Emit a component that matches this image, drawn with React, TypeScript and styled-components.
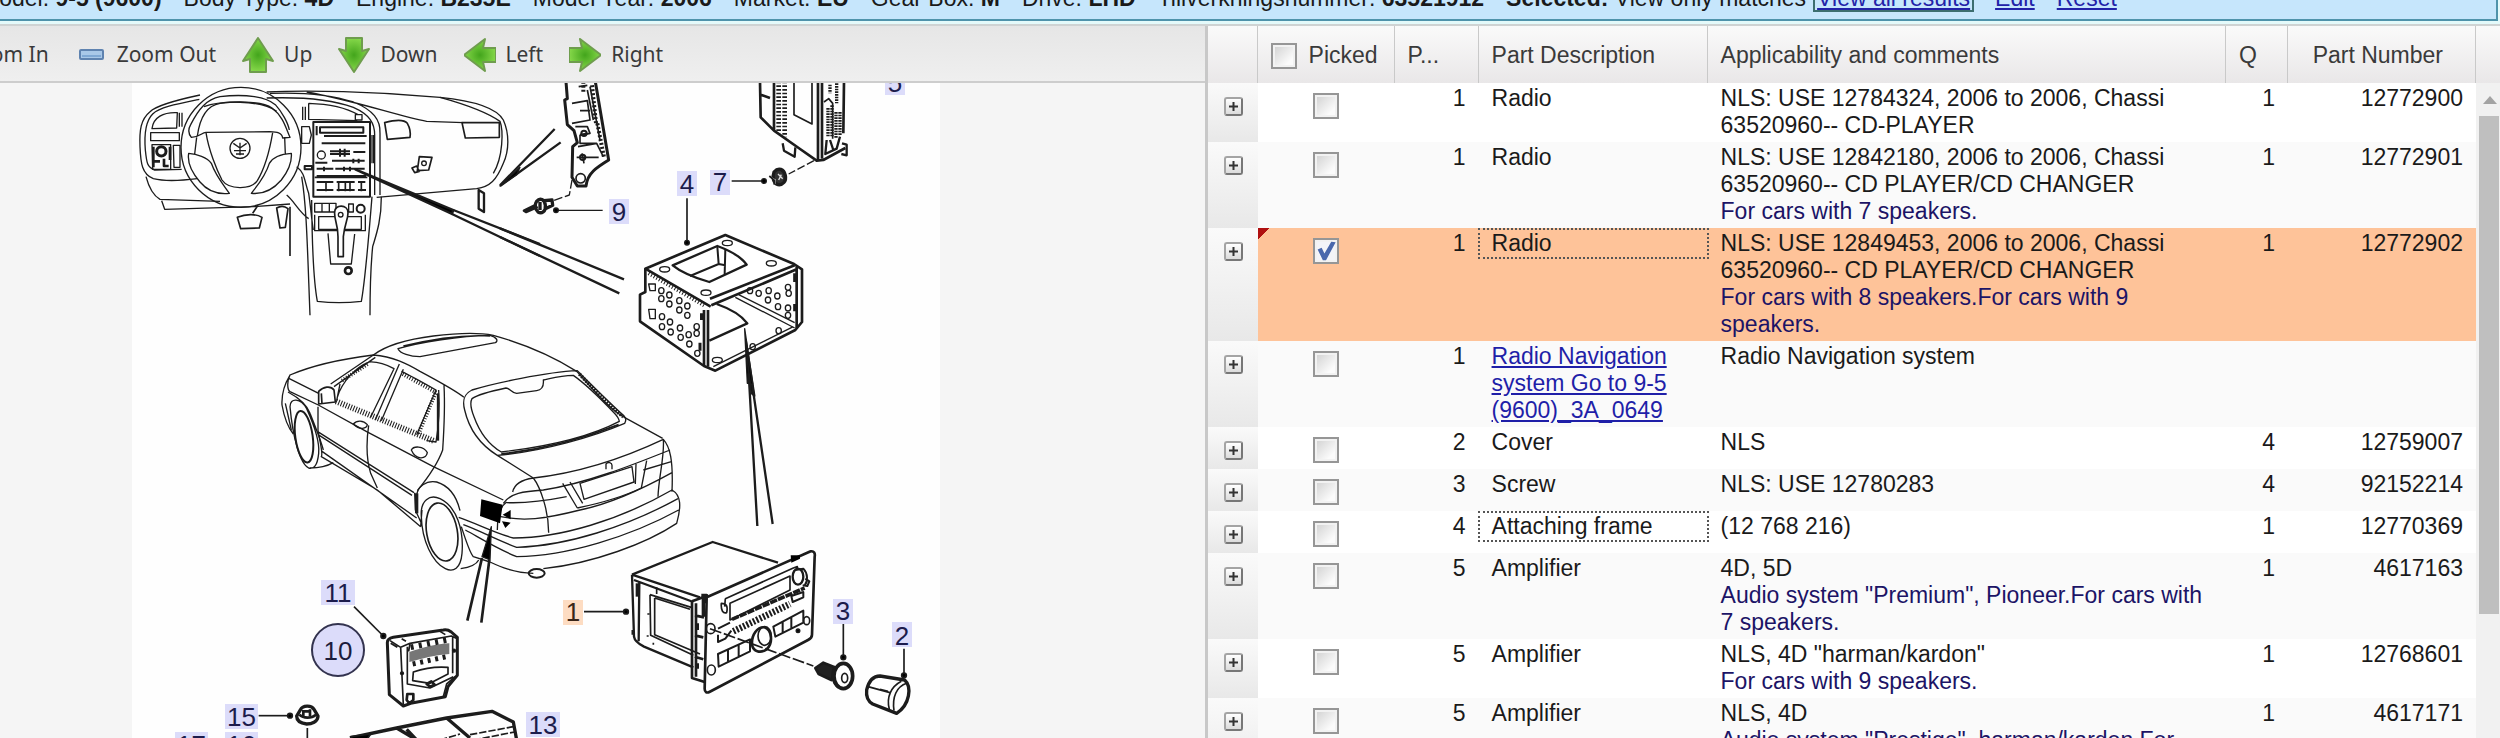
import React, { useState } from "react";
import styled, { createGlobalStyle, css } from "styled-components";

const GlobalStyle = createGlobalStyle`
  * { box-sizing: border-box; }
  body {
    margin: 0;
    font-family: "Liberation Sans", Arial, sans-serif;
    font-size: 23px;
    line-height: 27px;
    color: #1a1a1a;
    background: #fff;
  }
  button { font: inherit; color: inherit; }
`;

const Page = styled.div`
  display: flex;
  flex-direction: column;
  height: 100vh;
  overflow: hidden;
`;

/* vehicle filter bar */

const FilterBar = styled.header`
  flex: none;
  display: flex;
  height: 26px;
  overflow: hidden;
  background: #e4fafa;
  border-bottom: 2px solid #cfd3d3;
`;

const FilterInner = styled.div`
  flex: 1;
  display: flex;
  align-items: flex-end;
  height: 21px;
  margin-right: 2px;
  padding-bottom: 8px;
  background: #c6e6fc;
  border-bottom: 2px solid #4f93ab;
  border-right: 2px solid #4f93ab;
  line-height: 26px;
  white-space: pre;
`;

const FilterList = styled.div`
  flex: none;
  display: flex;
  gap: 22px;
  margin-left: -20px;
`;

const FilterActions = styled.div`
  flex: none;
  display: flex;
  gap: 22px;
  margin-left: 8px;
`;

const FilterLink = styled.a<{ $framed?: boolean }>`
  color: #2222a8;
  ${(p) =>
    p.$framed &&
    css`
      padding: 0 3px;
      outline: 2px solid #3c6e70;
      outline-offset: -1px;
    `}
`;

/* split area */

const Split = styled.main`
  flex: 1;
  display: flex;
  min-height: 0;
`;

const DiagramPane = styled.section`
  flex: 1206 1 0;
  min-width: 0;
  display: flex;
  flex-direction: column;
  background: #f5f5f5;
`;

const Toolbar = styled.div`
  flex: none;
  height: 57px;
  display: flex;
  align-items: center;
  gap: 26px;
  padding-top: 2px;
  background: linear-gradient(#e6e6e6, #efefef);
  border-bottom: 2px solid #cdcdcd;
  overflow: hidden;
`;

const ToolButton = styled.button<{ $cut?: boolean }>`
  flex: none;
  display: flex;
  align-items: center;
  gap: 10px;
  padding: 0;
  border: 0;
  background: none;
  font-family: "Noto Sans", Tahoma, sans-serif;
  font-size: 21px;
  color: #3a3a3a;
  margin-left: ${(p) => (p.$cut ? "-76px" : "0")};
`;

const ToolIcon = styled.svg`
  width: 32px;
  height: 36px;
`;

const Canvas = styled.div`
  flex: 1;
  min-height: 0;
  overflow: hidden;
  padding-left: 132px;
`;

const Drawing = styled.svg`
  display: block;
  width: 808px;
  height: 655px;
  background: #fefefe;
  font-size: 26px;
`;

const PartsPane = styled.section`
  flex: 1294 1 0;
  min-width: 0;
  display: flex;
  border-left: 3px solid #c8c8c8;
`;

const TableWrap = styled.div`
  flex: 1;
  min-width: 0;
  overflow: hidden;
`;

const Table = styled.table`
  width: 100%;
  table-layout: fixed;
  border-collapse: separate;
  border-spacing: 0;
`;

const headFill = css`
  height: 57px;
  background: linear-gradient(#fafafa, #e9e7e8);
`;

const HeadCell = styled.th<{ $align?: string }>`
  ${headFill}
  padding: 2px ${(p) => (p.$align === "right" ? "32px" : "13px")} 0 13px;
  border-right: 1px solid #c9c9c9;
  font-weight: normal;
  color: #3a3a3a;
  text-align: ${(p) => p.$align || "left"};
  white-space: nowrap;
  overflow: hidden;
`;

const PickAll = styled.label`
  display: flex;
  align-items: center;
  gap: 12px;
`;

const Cell = styled.td<{ $align?: string }>`
  padding: 2px 13px 3px;
  vertical-align: top;
  text-align: ${(p) => p.$align || "left"};
`;

const ExpandCell = styled.td`
  padding: 14px 0 0 16px;
  vertical-align: top;
  background: linear-gradient(#fafafa, #e8e8e8);
`;

const PickCell = styled.td<{ $marked?: boolean }>`
  padding: 10px 0 0;
  vertical-align: top;
  text-align: center;
  ${(p) =>
    p.$marked &&
    css`
      background: linear-gradient(135deg, #b01010 8px, transparent 8px);
    `}
`;

const Row = styled.tr<{ $picked?: boolean }>`
  height: 42px;
  background: ${(p) => (p.$picked ? "#fec399" : "#fff")};
  &:nth-child(even) {
    background: #fafafa;
  }
`;

const Description = styled.div<{ $focus?: boolean }>`
  margin: -1px -13px;
  padding: 1px 13px;
  outline: ${(p) => (p.$focus ? "2px dotted #555" : "none")};
  outline-offset: -1px;
`;

const PartLink = styled.a`
  display: block;
  color: #1f1fa8;
`;

const Note = styled.div`
  color: #1c1466;
`;

const Expander = styled.button`
  display: block;
  width: 19px;
  height: 19px;
  padding: 2px;
  border: 2px solid #777;
  border-top-color: #a4a4a4;
  border-left-color: #a4a4a4;
  border-radius: 3px;
  background: linear-gradient(#fff, #dcdcdc);
  svg {
    display: block;
    width: 11px;
    height: 11px;
  }
`;

const Check = styled.input`
  appearance: none;
  display: inline-block;
  width: 26px;
  height: 26px;
  margin: 0;
  border: 2px solid #969696;
  background: linear-gradient(135deg, #cfcfcf, #fbfbfb 75%);
  box-shadow: inset 0 0 0 2px #f2f2f2;
  vertical-align: top;
  &:checked {
    background: #f3f4f8;
  }
  &:checked::after {
    content: "";
    display: block;
    width: 20px;
    height: 20px;
    margin: 1px;
    background: #4a68ac;
    clip-path: polygon(8% 42%, 28% 34%, 42% 62%, 76% 4%, 98% 6%, 50% 96%, 34% 96%);
  }
`;

const ScrollColumn = styled.div`
  flex: none;
  width: 24px;
  display: flex;
  flex-direction: column;
  background: #f1f1f1;
`;

const ScrollHead = styled.div`
  ${headFill}
  flex: none;
`;

const ScrollUp = styled.button`
  flex: none;
  height: 33px;
  padding: 0 0 0 6px;
  border: 0;
  background: none;
  svg {
    display: block;
    width: 16px;
    height: 10px;
  }
`;

const ScrollThumb = styled.div`
  height: 80%;
  margin: 0 1px 0 3px;
  background: #bfbfbf;
`;

const ScrollTrack = styled.div`
  flex: 1;
`;

/* data */

const filters: [string, string][] = [
  ["Model", "9-5 (9600)"],
  ["Body Type", "4D"],
  ["Engine", "B235E"],
  ["Model Year", "2006"],
  ["Market", "EU"],
  ["Gear Box", "M"],
  ["Drive", "LHD"],
  ["Tillverkningsnummer", "63521912"],
];

type Part = {
  pos: number;
  name: string;
  text: string;
  note?: string;
  qty?: number;
  number?: string;
  link?: boolean;
  focus?: boolean;
};

const parts: Part[] = [
  { pos: 1, name: "Radio", text: "NLS: USE 12784324, 2006 to 2006, Chassi 63520960-- CD-PLAYER", qty: 1, number: "12772900" },
  { pos: 1, name: "Radio", text: "NLS: USE 12842180, 2006 to 2006, Chassi 63520960-- CD PLAYER/CD CHANGER", note: "For cars with 7 speakers.", qty: 1, number: "12772901" },
  { pos: 1, name: "Radio", text: "NLS: USE 12849453, 2006 to 2006, Chassi 63520960-- CD PLAYER/CD CHANGER", note: "For cars with 8 speakers.For cars with 9 speakers.", qty: 1, number: "12772902", focus: true },
  { pos: 1, name: "Radio Navigation system Go to 9-5 (9600)_3A_0649", text: "Radio Navigation system", link: true },
  { pos: 2, name: "Cover", text: "NLS", qty: 4, number: "12759007" },
  { pos: 3, name: "Screw", text: "NLS: USE 12780283", qty: 4, number: "92152214" },
  { pos: 4, name: "Attaching frame", text: "(12 768 216)", qty: 1, number: "12770369", focus: true },
  { pos: 5, name: "Amplifier", text: "4D, 5D", note: 'Audio system "Premium", Pioneer.For cars with 7 speakers.', qty: 1, number: "4617163" },
  { pos: 5, name: "Amplifier", text: 'NLS, 4D "harman/kardon"', note: "For cars with 9 speakers.", qty: 1, number: "12768601" },
  { pos: 5, name: "Amplifier", text: "NLS, 4D", note: 'Audio system "Prestige", harman/kardon.For cars with 9 speakers.', qty: 1, number: "4617171" },
];

/* toolbar icons */

const ArrowIcon = ({ turn }: { turn: number }) => (
  <ToolIcon viewBox="-16 -18 32 36" aria-hidden="true">
    <defs>
      <radialGradient id={`arrow${turn}`}>
        <stop offset="0" stopColor="#43a51c" />
        <stop offset="1" stopColor="#86d84a" />
      </radialGradient>
    </defs>
    <path
      d={turn % 180 ? "M0-16 16 5 7 3V16H-7V3L-16 5Z" : "M0-17 15 6 8 4V17H-8V4L-15 6Z"}
      transform={`rotate(${turn})`}
      fill={`url(#arrow${turn})`}
      stroke="#6f9d4e"
      strokeWidth="2"
      strokeLinejoin="round"
    />
  </ToolIcon>
);

const BarIcon = ({ plus }: { plus?: boolean }) => (
  <ToolIcon viewBox="0 0 32 36" aria-hidden="true">
    {plus && <rect x="12" y="7" width="8" height="22" fill="#a9c8e8" stroke="#4f79ae" strokeWidth="2" />}
    <rect x="5" y="13" width="23" height="9" rx="1" fill="#a9c8e8" stroke="#5f83b0" strokeWidth="2" />
    <path d="M7 19H26" stroke="#7fa8d4" strokeWidth="2" />
  </ToolIcon>
);

/* exploded view; every group is drawn on a grid three times finer than the sheet */

const Dashboard = () => (
  <g transform="translate(120 80) scale(.33333)" strokeWidth="4">
    <path d="M240 45C170 60 110 75 90 95 62 118 58 150 60 200 62 250 66 282 100 296 140 306 200 300 232 296M238 58C170 72 118 82 98 102 76 124 72 160 76 210 80 250 82 262 104 270L185 268" />
    <path d="M78 290C86 320 96 345 120 358L300 364M125 362 134 388 400 380 510 372M440 36C560 30 760 34 960 52 1060 62 1130 84 1150 120 1168 160 1168 210 1150 250 1130 300 1110 320 1070 326L770 352" />
    <path d="M450 40C560 36 640 46 700 66 760 90 782 120 780 160V345M440 54C560 50 640 60 700 82 750 104 764 130 764 165V345M560 36C700 60 840 110 920 124L1030 128M960 52C1040 74 1100 96 1140 124 1150 150 1150 230 1120 280 1100 306 1084 316M1078 84 1102 118 1134 124M782 196C900 190 1060 180 1160 186M858 196 850 260 828 306M768 340C860 330 960 328 1060 322" />
    <path d="M96 146C100 112 130 96 172 98L170 144ZM92 158H178V182H92ZM96 194H152V268H98ZM160 196H180V262H162Z" />
    <circle cx="124" cy="214" r="14" strokeWidth="9" />
    <path d="M100 200V262M104 244H120M132 236V258H146M150 200V240" strokeWidth="8" />
    <path d="M178 98V140M186 98V140" />
    <circle cx="363" cy="202" r="180" />
    <path d="M232 168C240 110 262 76 300 70 360 62 430 66 456 84 490 110 496 140 510 172L488 174C486 158 470 156 450 155L258 157C244 158 240 172 214 172 204 160 204 148 212 134 236 86 260 58 300 50 380 40 440 52 466 74 486 96 504 128 508 150" />
    <path d="M258 158C266 210 290 270 306 300 326 330 394 330 412 302 436 262 450 206 458 158M206 220C230 222 262 232 274 250 288 290 312 316 328 340 290 344 260 330 240 306 214 276 202 244 206 220ZM514 220C486 222 458 232 448 250 436 290 412 316 394 340 430 344 460 328 484 300 506 272 516 244 514 220ZM230 172 224 222M494 172 496 222M252 80C300 62 420 58 470 94" />
    <circle cx="360" cy="205" r="30" />
    <path d="M340 190 360 204 380 190M342 212H378M348 222H372M360 188V226" />
    <path d="M566 70C630 72 680 84 714 104M566 70V118L712 122M706 104H726V120H706ZM548 80V120M556 80V120M545 140H568L574 165 568 190H545Z" />
    <path d="M580 126H750V350H580Z" strokeWidth="6" />
    <path d="M600 142H730V158H600ZM590 138V166M612 168H740M605 190H736M630 214H690M630 222H690M700 216H736M636 242H690M684 242H734M590 266H640M646 266H734M586 248H622M590 288H738M590 306H640M650 306H704M714 306H736M590 330H640M650 330H704M714 330H738M660 206V230M674 206V230M700 236V250M716 236V250M612 260V274M672 260V274M690 260V274" strokeWidth="6" />
    <path d="M584 292H742M618 306V334M656 306V334M676 306V334M690 306V334M724 306V334" strokeWidth="5" />
    <circle cx="604" cy="225" r="12" />
    <path d="M752 165V250M760 165V250M554 258H576V268H554Z" strokeWidth="6" />
    <path d="M794 128C830 118 852 118 862 130 870 144 872 160 870 172L802 178ZM1026 128H1138V172L1036 174ZM898 230 936 232 926 270 892 272ZM876 264 890 258 898 274 884 278Z" strokeWidth="5" />
    <circle cx="912" cy="250" r="7" />
    <path d="M1076 330 1092 340V396L1076 386Z" strokeWidth="7" />
    <path d="M352 412C380 400 410 402 426 412L418 444 362 446ZM398 400 414 376M470 384C480 378 494 378 504 386L496 442 480 444ZM510 380V528" strokeWidth="5" />
    <path d="M500 345C520 360 540 400 566 416M545 290C560 380 562 500 570 706M575 360C576 480 580 600 592 664 640 670 690 668 724 664 736 600 748 450 756 350M530 260C556 280 552 300 566 340 572 380 576 430 580 450M784 350C784 420 770 460 758 500 752 560 750 630 750 706" />
    <path d="M584 370H648V396H584ZM606 370V396M628 370V396M686 372H700V396H686ZM596 410H724V448H596ZM584 404V452H736V404M624 460 632 552H694L704 462" />
    <circle cx="722" cy="386" r="12" strokeWidth="6" />
    <path d="M644 396C644 372 684 372 684 398 684 420 674 430 670 470V530H654V470C654 430 642 420 644 396Z" fill="#fff" strokeWidth="5" />
    <circle cx="662" cy="404" r="7" />
    <circle cx="685" cy="572" r="10" strokeWidth="8" />
    <path d="M706 268 1000 390 996 402Z" fill="#000" strokeWidth="7" />
    <path d="M1000 390 1260 492M996 402 1260 528" strokeWidth="7" />
  </g>
);

const Brackets = () => (
  <g transform="translate(500 80) scale(.33333)" strokeWidth="4">
    <path d="M0 445 372 598M0 471 358 640M0 316 164 147M0 318 182 187" strokeWidth="7" />
    <path d="M0 318 60 262 50 284Z" fill="#000" />
    <path d="M198 5 202 56 194 60 202 134 222 152 232 188 218 200 216 292 232 318 258 318C262 280 290 262 326 240L286 5" strokeWidth="9" />
    <path d="M216 70 262 62 270 120 216 130M236 20 262 16M240 92H270M226 140H262L270 160 240 166V190H290M230 232H296M234 200 290 190 310 230M262 30 280 120M270 20 300 180M240 164 262 160M246 220 252 250" strokeWidth="5" />
    <path d="M250 5V40M276 16 288 130M292 130 312 232" strokeDasharray="6 6" strokeWidth="12" />
    <circle cx="242" cy="295" r="14" strokeWidth="5" />
    <circle cx="252" cy="160" r="8" strokeWidth="6" />
    <circle cx="248" cy="232" r="8" strokeWidth="6" />
    <path d="M216 300 208 345 160 362" strokeDasharray="26 8" />
    <path d="M72 392 104 376 110 382 78 396Z" strokeWidth="8" />
    <path d="M110 364C120 352 134 358 136 376 138 396 124 402 114 396 104 388 104 372 110 364ZM132 362 156 360 158 376 136 386M120 366V390" strokeWidth="10" />
    <path d="M168 391H308" />
    <circle cx="168" cy="391" r="7" fill="#000" />
    <path d="M780 5 782 112 822 152 896 204 950 242 970 240 1036 204M822 5V152M954 5V240M966 5V236M1032 5 1030 160M782 44 810 54" strokeWidth="8" />
    <path d="M836 5V160M854 5V172" strokeDasharray="5 6" strokeWidth="14" />
    <path d="M882 5V104L936 132V5M972 66 986 56 998 70V176" strokeWidth="5" />
    <path d="M984 84V172M996 76V172M1008 96V174M1020 96V166M990 14V40M1010 10V70" strokeWidth="10" strokeDasharray="5 3" />
    <path d="M980 180 976 222 1010 206 1020 170M990 180 1000 210M848 190 852 212 884 230 886 202M1026 190 1040 194V226L1024 222" strokeWidth="7" />
    <path d="M942 242 866 282" strokeDasharray="24 8" />
    <path d="M822 276C836 260 852 268 856 286 860 304 848 316 834 314 820 310 816 292 822 276Z" fill="#333" strokeWidth="10" />
    <path d="M808 290 826 300 824 312M834 282 848 296M836 300 844 284" stroke="#ddd" strokeWidth="4" />
    <path d="M808 288 824 302 822 314" strokeWidth="5" />
    <path d="M695 303H792M561 355V488" strokeWidth="5" />
    <circle cx="792" cy="303" r="7" fill="#000" />
    <circle cx="561" cy="488" r="7" fill="#000" />
    <path d="M436 566 676 465 882 552 906 568V726L886 750 646 872 612 858 420 724V644L436 636Z" fill="#fff" strokeWidth="8" />
    <path d="M518 556 652 498C690 512 726 534 740 554L628 606C580 592 540 574 518 556Z" strokeWidth="7" />
    <path d="M652 500 656 552 570 588M676 508 674 582M656 552 676 556" strokeWidth="6" />
    <path d="M436 566 632 680M630 656 884 556M634 676 890 568M612 690V858M624 690V860M604 700V720M890 560V744" strokeWidth="8" />
    <path d="M446 580 612 676" strokeWidth="12" strokeDasharray="3 6" />
    <path d="M650 672C690 686 724 706 742 730L628 782" strokeWidth="7" />
    <path d="M706 652 884 744M716 644 884 728M640 860 880 740" strokeWidth="4" />
    <path d="M446 612H466V632H450ZM446 688H466V716H450Z" strokeWidth="4" />
    <g strokeWidth="4">
      {[[484, 632], [484, 656], [508, 645], [508, 672], [538, 662], [538, 690], [562, 678], [562, 706], [486, 710], [486, 740], [510, 726], [512, 756], [540, 744], [542, 772], [566, 764], [568, 792], [590, 740], [590, 760], [592, 820], [776, 640], [806, 632], [804, 660], [832, 648], [834, 680], [864, 622], [866, 640], [864, 684], [864, 706], [750, 632], [758, 800], [836, 752]].map(([x, y]) => (
        <ellipse key={`${x}-${y}`} cx={x} cy={y} rx="8" ry="9" />
      ))}
      {[[682, 489], [494, 568], [814, 550], [618, 638], [652, 840]].map(([x, y]) => (
        <ellipse key={`${x}-${y}`} cx={x} cy={y} rx="15" ry="8" />
      ))}
    </g>
    <path d="M600 788V812M884 580V606M884 672V694" strokeWidth="9" />
    <path d="M734 746 758 910 742 910Z" fill="#000" />
  </g>
);

const Car = () => (
  <g transform="translate(260 310) scale(.33333)" strokeWidth="4">
    <path d="M340 135C260 145 160 165 90 195 72 225 64 250 66 285 74 330 90 360 100 372M90 195C80 215 82 240 90 245L175 285 320 365 520 470 730 570M88 206 176 250M340 135C380 105 440 88 520 78 600 68 660 68 700 76 800 104 880 140 950 184 1010 250 1050 300 1100 326L1208 385" />
    <path d="M414 116C480 96 600 78 690 76 710 82 716 92 706 98L480 140C450 140 420 130 414 116ZM430 108C520 86 620 74 690 78" />
    <path d="M340 135C400 140 440 160 480 184 540 216 590 244 612 262M340 135 212 222M346 142 222 230M232 262C246 214 290 170 326 156 350 154 380 164 402 176L332 322M418 162 346 330M430 178 364 332M230 272 240 222M424 184C450 196 500 224 528 240L470 374M536 240C540 300 536 350 528 396L500 392M552 226C556 300 552 360 548 420 530 470 490 520 472 542" />
    <path d="M228 274 520 392" strokeWidth="18" strokeDasharray="3 5" />
    <path d="M428 192 530 248M526 250 474 374M246 212 326 160" strokeWidth="12" strokeDasharray="3 5" />
    <path d="M534 250V392" strokeWidth="7" />
    <path d="M176 282V244C190 230 212 226 222 240L226 276ZM186 282 184 250" strokeWidth="5" />
    <path d="M174 290V360C180 400 190 430 184 440L352 540 482 650M172 364 462 548M178 376 456 556M326 346C318 400 320 450 332 490L352 534M186 424 470 624M280 342C290 330 310 330 322 344 320 356 300 362 280 342ZM454 420C460 408 490 406 502 428 498 448 468 452 454 420Z" />
    <path d="M90 290C90 262 122 264 140 296 160 340 180 390 176 430 172 470 160 478 146 474 120 462 98 380 90 290ZM76 280 94 360M84 246C110 260 140 280 150 310 166 350 182 390 190 420M150 474C180 474 206 466 220 458" />
    <ellipse cx="132" cy="380" rx="26" ry="78" transform="rotate(-8 132 380)" strokeWidth="6" />
    <path d="M952 182C860 186 700 220 636 240 612 252 606 270 614 300 630 370 670 410 712 436 850 424 1000 380 1094 340 1100 330 1098 324 1092 318 1030 260 980 210 952 182ZM940 196C900 196 870 206 850 210 852 230 846 240 830 242L770 250C750 246 750 234 738 234 690 244 650 256 636 266 628 280 634 300 642 320 660 370 690 406 724 426 860 410 990 380 1078 334 1076 322 1070 316 1062 308 1020 264 980 224 940 196Z" />
    <path d="M958 192C1010 246 1050 290 1090 320" strokeWidth="11" strokeDasharray="5 4" />
    <path d="M724 432C850 418 960 390 1076 344" strokeWidth="6" />
    <path d="M712 436 820 504C960 488 1100 440 1210 388 1230 410 1240 450 1236 545M820 504C840 530 866 600 866 668M820 504C780 510 762 526 758 546M1210 388C1214 440 1196 500 1194 560M730 580C750 550 790 544 850 540 980 520 1120 464 1230 420M740 578C790 580 850 574 920 560M1150 480 1234 455M722 620C790 634 850 628 960 600 1060 580 1160 530 1236 488M712 660C712 620 720 590 740 576" />
    <path d="M908 520 952 594M930 516 968 580M952 594C1020 580 1090 560 1144 534L1160 452M960 520 1116 470 1122 516 972 568ZM1128 462 1126 522M1038 478V462C1044 454 1056 458 1056 466V478" />
    <path d="M596 622C650 640 700 668 760 684 900 684 1080 630 1236 540 1264 556 1264 590 1250 640 1160 700 1000 760 850 776M610 644C660 662 710 690 770 712 920 708 1100 650 1254 566M616 660C660 684 710 716 770 740 920 738 1110 680 1256 600M690 756C720 770 760 788 820 790" />
    <path d="M470 560C470 530 500 510 530 516 570 528 590 560 600 602M484 620C480 570 510 552 540 566 590 590 612 660 606 730 602 776 580 788 556 776 516 756 486 690 484 620ZM604 650C620 700 630 730 640 740L690 756M482 650 486 600M602 776C630 772 650 762 656 750M464 548 466 600 484 640" />
    <path d="M470 550V610" strokeWidth="10" />
    <ellipse cx="546" cy="666" rx="46" ry="88" transform="rotate(-10 546 666)" strokeWidth="5" />
    <ellipse cx="830" cy="790" rx="24" ry="13" strokeWidth="6" />
    <path d="M664 568 728 584 720 640 660 618ZM728 614 752 600V628ZM726 634 752 638 736 654Z" fill="#000" stroke="none" />
    <path d="M694 650 690 750 666 740Z" fill="#000" />
  </g>
);

const Radio = () => (
  <g transform="translate(560 340) scale(.33333)" strokeWidth="5">
    <path d="M558 0 584 168 574 160 562 60Z" fill="#000" />
    <path d="M566 100 592 558M576 130 638 552" strokeWidth="7" />
    <path d="M216 704 458 606 654 668M216 704 222 890C224 906 240 914 252 920L400 982M216 704 420 772M222 720 400 786M238 726 236 904M218 870V884" strokeWidth="7" />
    <path d="M232 730V770" strokeWidth="10" />
    <path d="M290 742V762M270 764 394 802M284 774 390 808M270 764 272 886 400 946M284 774V884L420 942M262 822H268M260 888H266M280 908V914" strokeWidth="5" />
    <path d="M396 784V1014L434 1026M408 790V1010M396 784 440 768M404 826 432 832M404 886 430 892M404 950 430 958" strokeWidth="8" />
    <path d="M424 766H440V790M430 770V830M412 850V870M412 970V986" strokeWidth="10" />
    <path d="M440 772 752 634C762 632 766 640 764 650L756 884C756 892 752 896 744 900L448 1056C440 1060 434 1056 434 1046Z" fill="#fff" strokeWidth="8" />
    <path d="M692 646H720V656L694 668Z" fill="#000" stroke="none" />
    <path d="M496 776 700 684 712 680V700M496 776 494 800M510 840V790L690 708V750ZM484 790C500 790 504 800 500 818 490 822 482 812 484 790Z" strokeWidth="5" />
    <path d="M516 838 734 744" strokeWidth="11" strokeDasharray="22 3" />
    <path d="M520 874 690 792" strokeWidth="20" strokeDasharray="6 5" />
    <path d="M474 866 510 848M474 884 474 906 496 896 514 872M694 768 730 756V772L698 786ZM640 860 730 812V848L646 890ZM668 846V878M694 832V866M474 942 570 898V934L476 980ZM504 930V964M536 916V950" strokeWidth="6" />
    <ellipse cx="714" cy="710" rx="16" ry="24" strokeWidth="7" fill="#fff" />
    <path d="M706 690 730 686C744 700 744 724 734 736M736 716 748 724 742 738 728 736" strokeWidth="6" />
    <path d="M576 914C574 884 592 860 614 862 636 870 640 910 620 928 600 942 580 934 576 914Z" fill="#fff" strokeWidth="8" />
    <ellipse cx="614" cy="888" rx="20" ry="28" strokeWidth="5" />
    <ellipse cx="452" cy="866" rx="13" ry="15" />
    <ellipse cx="454" cy="990" rx="12" ry="15" />
    <ellipse cx="740" cy="842" rx="9" ry="12" />
    <circle cx="714" cy="872" r="5" fill="#000" />
    <path d="M450 866 760 978" strokeDasharray="36 8" />
    <path d="M72 815H198M850 852V950M1032 926V1004" />
    <circle cx="198" cy="815" r="7" fill="#000" />
    <circle cx="850" cy="952" r="7" fill="#000" />
    <circle cx="1032" cy="1006" r="7" fill="#000" />
    <path d="M766 984 790 968 830 984 814 1020 776 1002Z" fill="#222" strokeWidth="8" />
    <ellipse cx="850" cy="1008" rx="28" ry="38" fill="#fff" strokeWidth="11" />
    <path d="M826 980C812 1000 818 1030 836 1042" strokeWidth="9" />
    <ellipse cx="854" cy="1014" rx="9" ry="14" strokeWidth="5" />
    <path d="M920 1050C926 1024 940 1008 960 1008L1034 1020C1056 1040 1050 1094 1010 1120L938 1092C924 1084 918 1068 920 1050Z" fill="#fff" strokeWidth="10" />
    <path d="M1024 1024C994 1040 978 1070 988 1108M1040 1030C1010 1040 996 1070 1002 1112M924 1040 990 1058M960 1048 984 1054" strokeWidth="5" />
  </g>
);

const Modules = () => (
  <g transform="translate(120 560) scale(.33333)" strokeWidth="5">
    <path d="M1086 -6 1042 182M1108 0 1084 188" strokeWidth="8" />
    <path d="M702 140 790 228" />
    <circle cx="790" cy="228" r="7" fill="#000" />
    <path d="M802 248C802 238 810 234 820 232L970 210C980 208 986 210 994 216L1012 232V346L984 380 976 410 872 430 850 438 808 404Z" fill="#fff" strokeWidth="9" />
    <path d="M810 242 842 262 850 434M842 262 870 250 994 228 1012 236M862 260V372L930 384 1000 350M870 250 866 274M998 232V340M845 236 858 244M960 214 976 224M812 250 832 262M880 336C920 322 960 320 984 322V342L930 370 878 362ZM970 410 980 372 1008 348" />
    <path d="M868 276C910 262 950 252 988 250V282C950 284 910 294 868 306Z" fill="#777" stroke="none" />
    <path d="M872 262 990 238" strokeWidth="17" strokeDasharray="9 16" />
    <path d="M878 312 988 288" strokeWidth="15" strokeDasharray="9 14" />
    <path d="M862 402H880V420L868 430 860 420ZM920 372 934 364 944 374 930 380Z" strokeWidth="8" />
    <circle cx="1002" cy="272" r="4" fill="#000" />
    <circle cx="846" cy="340" r="4" fill="#000" />
    <path d="M416 467H508" />
    <circle cx="510" cy="467" r="7" fill="#000" />
    <path d="M542 448C548 436 574 434 582 448L594 468C594 486 574 492 560 492 542 490 530 482 530 468Z" fill="#fff" strokeWidth="10" />
    <path d="M538 464C550 476 574 476 588 464M550 450V468M570 448V468M550 454H574" strokeWidth="8" />
    <path d="M562 504V540" />
    <path d="M690 534 830 504 880 534M830 504 980 474 1050 534M980 474 1116 454 1180 486 1190 540M860 508 890 540" strokeWidth="10" />
    <path d="M692 530 752 522 740 540H700Z" fill="#000" />
    <path d="M960 540 1020 522M1050 524 1180 500M1060 540 1184 516" strokeDasharray="22 6" />
  </g>
);

const hotspots = [
  { n: "5", x: 885, y: 70, w: 20, base: 92 },
  { n: "4", x: 677, y: 171, w: 20, base: 193 },
  { n: "7", x: 710, y: 170, w: 20, base: 191 },
  { n: "9", x: 609, y: 199, w: 20, base: 221 },
  { n: "11", x: 321, y: 580, w: 34, base: 602 },
  { n: "15", x: 225, y: 704, w: 33, base: 726 },
  { n: "13", x: 526, y: 712, w: 34, base: 734 },
  { n: "17", x: 175, y: 732, w: 33, base: 754 },
  { n: "16", x: 225, y: 732, w: 33, base: 754 },
  { n: "1", x: 563, y: 600, w: 20, base: 621, active: true },
  { n: "3", x: 833, y: 599, w: 20, base: 620 },
  { n: "2", x: 892, y: 622, w: 20, base: 645 },
];

const Diagram = () => (
  <Drawing viewBox="132 83 808 655" role="img" aria-label="Radio and amplifier exploded view">
    <g fill="none" stroke="#1c1c1c" strokeLinejoin="round">
      <Dashboard />
      <Car />
      <Brackets />
      <Radio />
      <Modules />
    </g>
    <circle cx="338" cy="650" r="26" fill="#dcdcfa" stroke="#33334f" strokeWidth="2" />
    <text x="338" y="660" textAnchor="middle" fill="#1c1c3c">10</text>
    {hotspots.map((h) => (
      <g key={h.n}>
        <rect x={h.x} y={h.y} width={h.w} height="25" fill={h.active ? "#fddcc2" : "#dcdcfa"} />
        <text x={h.x + h.w / 2} y={h.base} textAnchor="middle" fill={h.active ? "#3a2618" : "#1c1c4c"}>
          {h.n}
        </text>
      </g>
    ))}
  </Drawing>
);

export default function App() {
  const [picked, setPicked] = useState<boolean[]>(parts.map((_, i) => i === 2));
  const toggle = (i: number) => setPicked(picked.map((v, k) => (k === i ? !v : v)));

  return (
    <>
      <GlobalStyle />
      <Page>
        <FilterBar>
          <FilterInner>
            <FilterList>
              {filters.map(([label, value]) => (
                <span key={label}>
                  {label}: <b>{value}</b>
                </span>
              ))}
              <span>
                <b>Selected:</b> View only matches
              </span>
            </FilterList>
            <FilterActions>
              <FilterLink href="#all" $framed>View all results</FilterLink>
              <FilterLink href="#edit">Edit</FilterLink>
              <FilterLink href="#reset">Reset</FilterLink>
            </FilterActions>
          </FilterInner>
        </FilterBar>
        <Split>
          <DiagramPane>
            <Toolbar>
              <ToolButton $cut><BarIcon plus />Zoom In</ToolButton>
              <ToolButton><BarIcon />Zoom Out</ToolButton>
              <ToolButton><ArrowIcon turn={0} />Up</ToolButton>
              <ToolButton><ArrowIcon turn={180} />Down</ToolButton>
              <ToolButton><ArrowIcon turn={270} />Left</ToolButton>
              <ToolButton><ArrowIcon turn={90} />Right</ToolButton>
            </Toolbar>
            <Canvas><Diagram /></Canvas>
          </DiagramPane>
          <PartsPane>
            <TableWrap>
              <Table>
                <colgroup>
                  <col width="50" />
                  <col width="137" />
                  <col width="84" />
                  <col width="229" />
                  <col />
                  <col width="62" />
                  <col width="188" />
                </colgroup>
                <thead>
                  <tr>
                    <HeadCell />
                    <HeadCell>
                      <PickAll><Check type="checkbox" />Picked</PickAll>
                    </HeadCell>
                    <HeadCell>P...</HeadCell>
                    <HeadCell>Part Description</HeadCell>
                    <HeadCell>Applicability and comments</HeadCell>
                    <HeadCell>Q</HeadCell>
                    <HeadCell $align="right">Part Number</HeadCell>
                  </tr>
                </thead>
                <tbody>
                  {parts.map((p, i) => (
                    <Row key={i} $picked={picked[i]}>
                      <ExpandCell>
                        <Expander aria-label="Expand row">
                          <svg viewBox="0 0 11 11"><path d="M5.500 1V10M1 5.500H10" stroke="#333" strokeWidth="2" /></svg>
                        </Expander>
                      </ExpandCell>
                      <PickCell $marked={picked[i]}>
                        <Check type="checkbox" aria-label={`Pick ${p.name}`} checked={picked[i]} onChange={() => toggle(i)} />
                      </PickCell>
                      <Cell $align="right">{p.pos}</Cell>
                      <Cell>
                        <Description $focus={p.focus}>
                          {p.link ? <PartLink href="#part">{p.name}</PartLink> : p.name}
                        </Description>
                      </Cell>
                      <Cell>
                        {p.text}
                        {p.note && <Note>{p.note}</Note>}
                      </Cell>
                      <Cell $align="right">{p.qty}</Cell>
                      <Cell $align="right">{p.number}</Cell>
                    </Row>
                  ))}
                </tbody>
              </Table>
            </TableWrap>
            <ScrollColumn>
              <ScrollHead />
              <ScrollUp aria-label="Scroll up">
                <svg viewBox="0 0 16 10"><path d="M8 1 15 9H1Z" fill="#a3a3a3" /></svg>
              </ScrollUp>
              <ScrollTrack>
                <ScrollThumb />
              </ScrollTrack>
            </ScrollColumn>
          </PartsPane>
        </Split>
      </Page>
    </>
  );
}
